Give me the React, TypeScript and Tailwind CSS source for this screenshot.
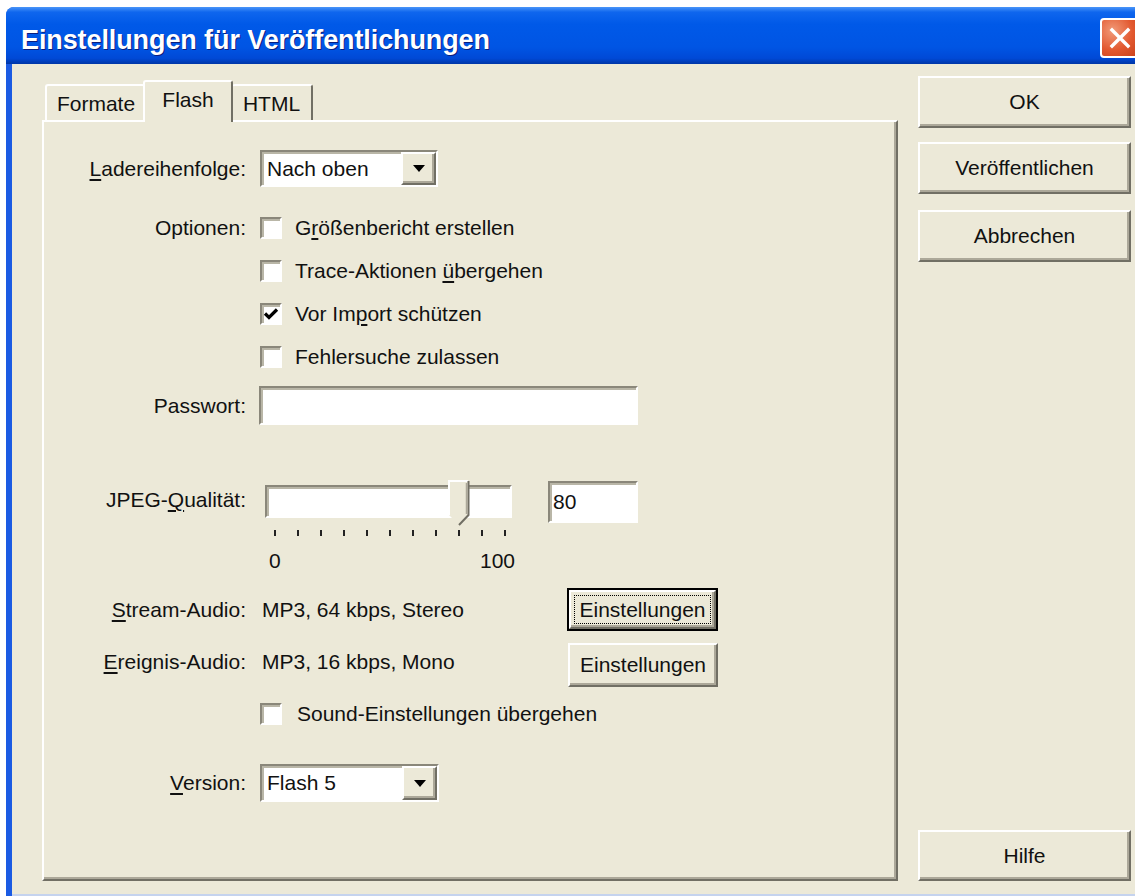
import React from "react";

// Classic 3D edges used by the dialog's controls
const raised =
  "border-2 border-t-white border-l-white border-r-[#716f64] border-b-[#716f64] shadow-[inset_-2px_-2px_0_#aca899]";
const sunken =
  "border-2 border-t-[#8a877a] border-l-[#8a877a] border-r-white border-b-white shadow-[inset_2px_2px_0_#b9b6a7]";

function U({ children }: { children: React.ReactNode }) {
  return <span className="underline decoration-[1.5px] underline-offset-[3px]">{children}</span>;
}

function Checkbox({ checked = false }: { checked?: boolean }) {
  return (
    <span className={`flex h-[22px] w-[22px] shrink-0 items-center justify-center bg-white ${sunken}`}>
      {checked && (
        <svg width="16" height="14" viewBox="0 0 16 14">
          <path d="M2 6.5 L6 10.5 L14 2.5" fill="none" stroke="#000" strokeWidth="3.2" />
        </svg>
      )}
    </span>
  );
}

function Arrow() {
  return (
    <svg width="12" height="7" viewBox="0 0 12 7">
      <path d="M0 0 H12 L6 7 Z" fill="#000" />
    </svg>
  );
}

function Select({ value, w, h }: { value: string; w: string; h: string }) {
  return (
    <div className={`flex ${w} ${h} items-stretch bg-white ${sunken}`}>
      <span className="flex flex-1 items-center pl-[5px]">{value}</span>
      <span className={`flex w-[35px] items-center justify-center bg-[#ece9d8] ${raised}`}>
        <Arrow />
      </span>
    </div>
  );
}

function Row({
  label,
  className = "",
  labelClass = "",
  children,
}: {
  label: React.ReactNode;
  className?: string;
  labelClass?: string;
  children?: React.ReactNode;
}) {
  return (
    <div className={`flex items-center ${className}`}>
      <div className={`w-[202px] shrink-0 text-right ${labelClass}`}>{label}</div>
      <div className="ml-[13px] flex items-center">{children}</div>
    </div>
  );
}

function CheckRow({ checked, children }: { checked?: boolean; children: React.ReactNode }) {
  return (
    <div className="flex h-[43px] items-center pl-[1px]">
      <Checkbox checked={checked} />
      <span className="ml-[13px]">{children}</span>
    </div>
  );
}

function DialogButton({ children, className = "" }: { children: React.ReactNode; className?: string }) {
  return (
    <div className={`flex w-[213px] items-center justify-center bg-[#ece9d8] ${raised} ${className}`}>
      {children}
    </div>
  );
}

function Slider() {
  const ticks = Array.from({ length: 11 });
  return (
    <div className="relative w-[253px]">
      <div className="h-[45px] pt-[5px]">
        <div className={`ml-[6px] h-[33px] w-[247px] bg-white ${sunken}`} />
      </div>
      {/* thumb sits over the track */}
      <svg className="absolute left-[189px] top-0" width="22" height="46" viewBox="0 0 22 46">
        <path d="M1 35 V1 H21 V35 L11 45 Z" fill="#ece9d8" />
        <path d="M1 35 V1 H20" fill="none" stroke="#ffffff" strokeWidth="2" />
        <path d="M20.5 1 V35 L11 45" fill="none" stroke="#716f64" strokeWidth="2" />
        <path d="M18.5 3 V34" fill="none" stroke="#aca899" strokeWidth="1.5" />
      </svg>
      <div className="ml-[15px] mt-[5px] flex h-[6px] w-[232px] justify-between">
        {ticks.map((_, i) => (
          <span key={i} className="h-[6px] w-[2px] bg-[#222]" />
        ))}
      </div>
      <div className="ml-[10px] mt-[12px] flex h-[24px] w-[246px] items-center justify-between leading-none">
        <span>0</span>
        <span>100</span>
      </div>
    </div>
  );
}

function CloseIcon() {
  return (
    <svg width="22" height="22" viewBox="0 0 22 22">
      <path d="M3 3 L19 19 M19 3 L3 19" stroke="#fff" strokeWidth="3.4" strokeLinecap="square" />
    </svg>
  );
}

export default function App() {
  return (
    <div className="h-[896px] w-[1135px] overflow-hidden bg-white pl-[6px] pt-[7px] font-['Liberation_Sans',Arial,sans-serif] text-[21px] text-[#111]">
      <div className="flex h-full flex-col rounded-tl-[8px] bg-[#1b5be3]">
        {/* caption */}
        <div className="flex h-[57px] shrink-0 rounded-tl-[8px] bg-[linear-gradient(to_bottom,#4a95f8_0%,#0f66ee_9%,#0059e8_30%,#0055e4_70%,#0049d6_90%,#0036a6_100%)] pl-[15px]">
          <div className="flex items-center pt-[10px] text-[27px] font-bold tracking-[-0.1px] text-white [text-shadow:1px_1px_0_#0a1d7e]">
            Einstellungen für Veröffentlichungen
          </div>
          <div className="-mr-[5px] ml-auto mt-[11px] flex h-[40px] w-[40px] items-center justify-center rounded-[4px] border-2 border-white bg-[radial-gradient(circle_at_30%_30%,#f19a78_0%,#e2582f_55%,#c8401a_100%)]">
            <CloseIcon />
          </div>
        </div>

        {/* client area */}
        <div className="ml-[6px] flex flex-1 border-b-2 border-b-[#c5d3ee] bg-[#ece9d8] pb-[13px] pl-[30px] pt-[12px]">
          <div className="flex w-[856px] flex-col pt-[4px]">
            {/* tabs */}
            <div className="flex h-[40px] items-end pl-[3px]">
              <div className="flex h-[36px] w-[100px] items-center justify-center rounded-t-[3px] border-l-2 border-t-2 border-white bg-[#ece9d8] pt-[2px]">
                Formate
              </div>
              <div className="relative z-10 -mb-[2px] -ml-[2px] flex h-[42px] w-[90px] items-center justify-center rounded-t-[3px] border-l-2 border-r-2 border-t-2 border-white border-r-[#716f64] bg-[#ece9d8] pb-[5px]">
                Flash
              </div>
              <div className="-ml-[1px] flex h-[36px] w-[81px] items-center justify-center rounded-t-[3px] border-r-2 border-t-2 border-t-white border-r-[#716f64] bg-[#ece9d8] pt-[2px]">
                HTML
              </div>
            </div>

            {/* Flash page */}
            <div className="flex flex-1 flex-col border-2 border-t-white border-l-white border-r-[#716f64] border-b-[#716f64] shadow-[inset_-2px_-2px_0_#aca899]">
              <Row label={<><U>L</U>adereihenfolge:</>} className="mt-[28px] h-[37px]">
                <div className="pl-[1px]">
                  <Select value="Nach oben" w="w-[178px]" h="h-[37px]" />
                </div>
              </Row>

              <div className="mt-[19px] flex">
                <div className="flex h-[43px] w-[202px] shrink-0 items-center justify-end">Optionen:</div>
                <div className="ml-[13px] flex flex-col">
                  <CheckRow>
                    G<U>r</U>ößenbericht erstellen
                  </CheckRow>
                  <CheckRow>
                    Trace-Aktionen <U>ü</U>bergehen
                  </CheckRow>
                  <CheckRow checked>
                    Vor Im<U>p</U>ort schützen
                  </CheckRow>
                  <CheckRow>Fehlersuche zulassen</CheckRow>
                </div>
              </div>

              <Row label="Passwort:" className="mt-[8px] h-[39px]">
                <div className={`h-[39px] w-[379px] bg-white ${sunken}`} />
              </Row>

              <div className="mt-[55px] flex items-start">
                <div className="flex h-[40px] w-[202px] shrink-0 items-center justify-end">
                  JPEG-<U>Q</U>ualität:
                </div>
                <div className="ml-[13px]">
                  <Slider />
                </div>
                <div className={`ml-[36px] mt-[1px] flex h-[42px] w-[90px] items-center bg-white pl-[3px] ${sunken}`}>
                  80
                </div>
              </div>

              <Row label={<><U>S</U>tream-Audio:</>} className="mt-[16px] h-[43px]">
                <span className="w-[308px] pl-[3px]">MP3, 64 kbps, Stereo</span>
                <div className="h-[43px] w-[151px] border-2 border-black">
                  <div className={`flex h-full w-full bg-[#ece9d8] p-[3px] ${raised}`}>
                    <span className="flex flex-1 items-center justify-center border border-dotted border-black">
                      Einstellungen
                    </span>
                  </div>
                </div>
              </Row>

              <Row label={<><U>E</U>reignis-Audio:</>} className="mt-[12px] h-[44px]" labelClass="pb-[6px]">
                <span className="w-[309px] pb-[6px] pl-[3px]">MP3, 16 kbps, Mono</span>
                <div className={`flex h-[44px] w-[150px] items-center justify-center bg-[#ece9d8] ${raised}`}>
                  Einstellungen
                </div>
              </Row>

              <div className="ml-[215px] mt-[12px] flex h-[30px] items-center pl-[1px]">
                <Checkbox />
                <span className="ml-[15px]">Sound-Einstellungen übergehen</span>
              </div>

              <Row label={<><U>V</U>ersion:</>} className="mt-[35px] h-[38px]">
                <div className="pl-[1px]">
                  <Select value="Flash 5" w="w-[179px]" h="h-[38px]" />
                </div>
              </Row>
            </div>
          </div>

          {/* command buttons */}
          <div className="ml-[20px] flex flex-col">
            <DialogButton className="h-[52px]">OK</DialogButton>
            <DialogButton className="mt-[14px] h-[52px]">Veröffentlichen</DialogButton>
            <DialogButton className="mt-[16px] h-[52px]">Abbrechen</DialogButton>
            <DialogButton className="mt-auto h-[51px]">Hilfe</DialogButton>
          </div>
        </div>
      </div>
    </div>
  );
}
